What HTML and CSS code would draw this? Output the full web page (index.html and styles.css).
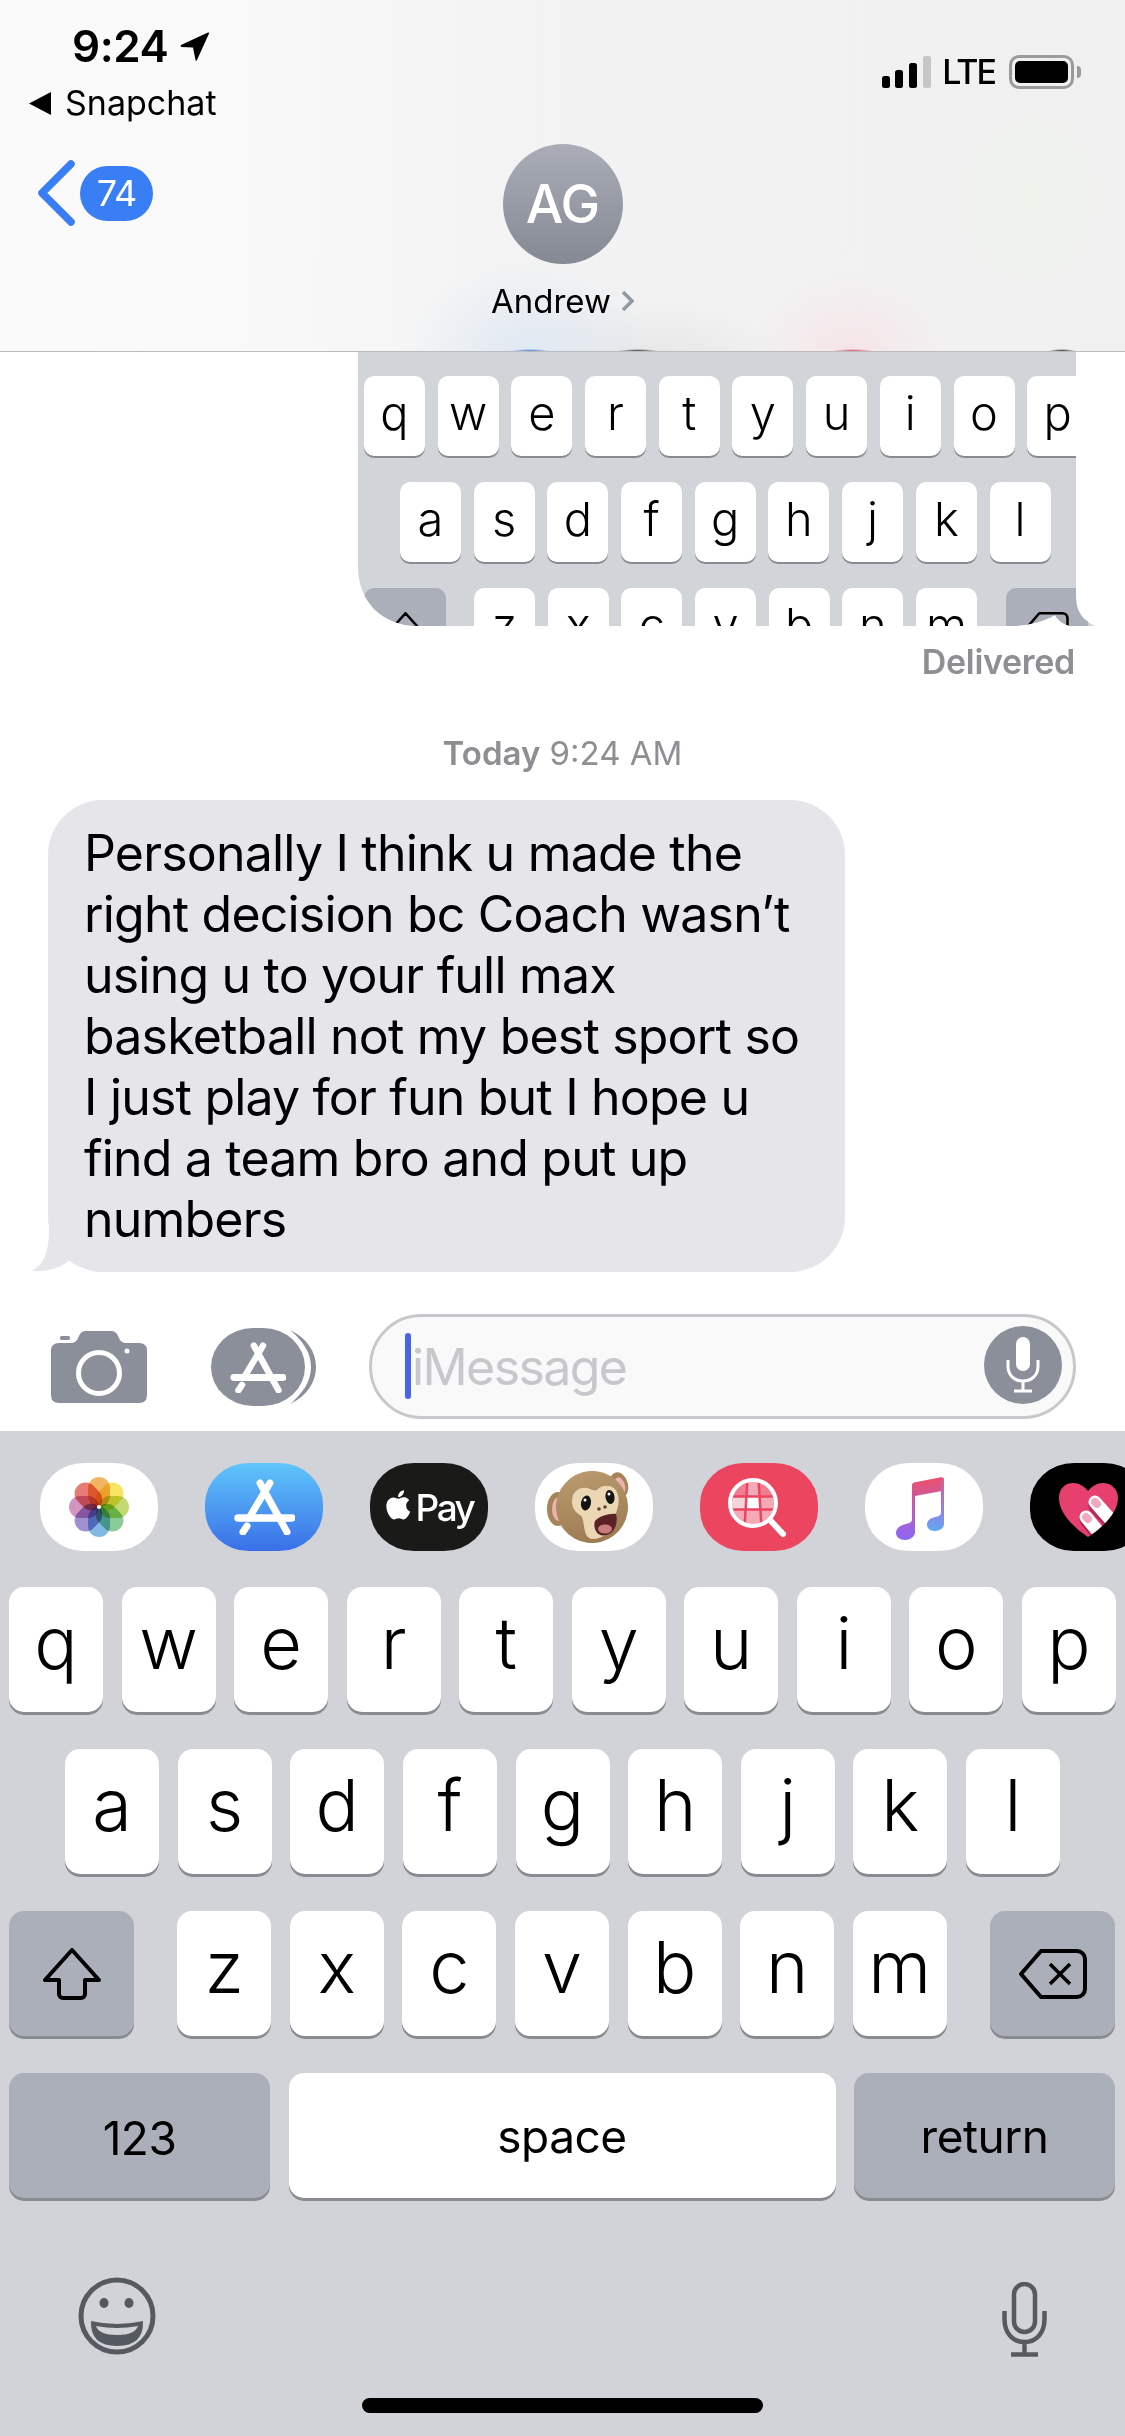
FILE: index.html
```html
<!DOCTYPE html>
<html lang="en">
<head>
<meta charset="utf-8">
<title>Messages</title>
<link rel="stylesheet" href="styles.css">
</head>
<body>
<svg class="defs" aria-hidden="true">
  <symbol id="appstore" viewBox="0 0 61 56">
    <g fill="none" stroke="#fff" stroke-linecap="round">
      <path stroke-width="7" d="M36 4 15 39M13 47l-4 6M26 4l27 49"/>
      <path stroke-width="7.5" d="M4 39h54"/>
    </g>
  </symbol>
  <symbol id="shift" viewBox="0 0 58 52">
    <path fill="none" stroke="currentColor" stroke-width="4" stroke-linejoin="round" d="M29 2 2 32h14v14a4 4 0 0 0 4 4h18a4 4 0 0 0 4-4V32h14z"/>
  </symbol>
  <symbol id="delete" viewBox="0 0 68 50">
    <path fill="none" stroke="currentColor" stroke-width="4" stroke-linejoin="round" d="M22 2h36a8 8 0 0 1 8 8v30a8 8 0 0 1-8 8H22L2 25z"/>
    <path fill="none" stroke="currentColor" stroke-width="3.5" d="m31 15 20 20M51 15 31 35"/>
  </symbol>
</svg>
<main class="phone">
  <header class="header">
    <div class="status">
      <div class="status-left">
        <div class="time-row">
          <span class="time">9:24</span>
          <svg class="loc" viewBox="0 0 30 30"><path d="M1 14 28 1.500q1.500-.5 1 1L17 29q-1 1.500-1.500 0L13 16.500 1.500 16q-1.500-1-.5-2z"/></svg>
        </div>
        <div class="source">
          <svg class="source-arrow" viewBox="0 0 22 23"><path d="M0 11.500 22 0v23z"/></svg>
          <span>Snapchat</span>
        </div>
      </div>
      <div class="status-right">
        <svg class="signal" viewBox="0 0 50 32">
          <rect x="0" y="20" width="8" height="12" rx="2.500"/>
          <rect x="13" y="14" width="8" height="18" rx="2.500"/>
          <rect x="27" y="7" width="8" height="25" rx="2.500"/>
          <rect class="signal-off" x="41" y="0" width="8" height="32" rx="2.500"/>
        </svg>
        <span class="lte">LTE</span>
        <div class="battery"><div class="battery-fill"></div></div>
        <div class="battery-nub"></div>
      </div>
    </div>
    <div class="nav">
      <div class="nav-back">
        <svg class="chevron" viewBox="0 0 40 66"><path d="M34 4 5 33l29 29"/></svg>
        <span class="badge">74</span>
      </div>
      <div class="contact">
        <div class="avatar">AG</div>
        <div class="contact-name">
          <span>Andrew</span>
          <svg class="name-chevron" viewBox="0 0 13 20"><path d="m2 1 9 9-9 9"/></svg>
        </div>
      </div>
    </div>
  </header>

  <section class="thread">
    <div class="mini">
      <div class="key-row mini-row1">
        <div class="key">q</div><div class="key">w</div><div class="key">e</div><div class="key">r</div><div class="key">t</div><div class="key">y</div><div class="key">u</div><div class="key">i</div><div class="key">o</div><div class="key">p</div>
      </div>
      <div class="key-row mini-row2">
        <div class="key">a</div><div class="key">s</div><div class="key">d</div><div class="key">f</div><div class="key">g</div><div class="key">h</div><div class="key">j</div><div class="key">k</div><div class="key">l</div>
      </div>
      <div class="key-row mini-row3">
        <div class="key key-dark key-side"><svg class="ico-shift"><use href="#shift"/></svg></div>
        <div class="key">z</div><div class="key">x</div><div class="key">c</div><div class="key">v</div><div class="key">b</div><div class="key">n</div><div class="key">m</div>
        <div class="key key-dark key-side key-del"><svg class="ico-delete"><use href="#delete"/></svg></div>
      </div>
    </div>
    <div class="delivered">Delivered</div>
    <div class="stamp"><strong>Today</strong> 9:24 AM</div>
    <div class="bubble">
      <svg class="tail" viewBox="0 0 40 44"><path d="M18 0c0 25-6 36-17 42 16 1 28-3 38-11V0z"/></svg>
      Personally I think u made the<br>
      right decision bc Coach wasn’t<br>
      using u to your full max<br>
      basketball not my best sport so<br>
      I just play for fun but I hope u<br>
      find a team bro and put up<br>
      numbers
    </div>
  </section>

  <section class="composer">
    <svg class="camera" viewBox="0 0 96 72">
      <path class="ico-fill" d="M8 12h13q3 0 5-3l3-6q2-3 5-3h27q3 0 5 3l3 6q2 3 5 3h14q8 0 8 8v44q0 8-8 8H8q-8 0-8-8V20q0-8 8-8z"/>
      <rect x="9" y="5" width="10" height="4" rx="1.500" class="ico-fill"/>
      <rect x="9" y="10" width="10" height="2" fill="#fff"/>
      <circle cx="48" cy="42" r="20.500" fill="none" stroke="#fff" stroke-width="5"/>
      <circle cx="76" cy="20" r="2.500" fill="#fff"/>
    </svg>
    <svg class="apps-btn" viewBox="0 0 105 78">
      <rect class="ico-fill" x="0" y="0" width="94" height="78" rx="42" ry="39"/>
      <path class="ico-fill" d="M79 2c17 8 26 22 26 37s-9 29-26 37c12-10 21-22 21-37S91 12 79 2z"/>
      <use href="#appstore" x="19" y="14" width="56" height="51"/>
    </svg>
    <div class="field">
      <span class="caret"></span>
      <span class="placeholder">iMessage</span>
      <svg class="field-mic" viewBox="0 0 78 78">
        <ellipse class="ico-fill" cx="39" cy="39" rx="39" ry="39"/>
        <rect x="32" y="11" width="14" height="34" rx="7" fill="#fff"/>
        <path d="M24 34v6c0 9 6 15 15 15s15-6 15-15v-6M39 55v10M30 65h18" fill="none" stroke="#fff" stroke-width="3"/>
      </svg>
    </div>
  </section>

  <section class="keyboard">
    <div class="app-strip">
      <div class="pill pill-white">
        <svg class="pill-art" viewBox="0 0 118 88">
          <g class="petals">
            <rect x="48" y="14" width="22" height="30" rx="11" fill="#f0a23c"/>
            <rect x="48" y="14" width="22" height="30" rx="11" fill="#f5de3c" transform="rotate(45 59 44)"/>
            <rect x="48" y="14" width="22" height="30" rx="11" fill="#b4d14e" transform="rotate(90 59 44)"/>
            <rect x="48" y="14" width="22" height="30" rx="11" fill="#6cc07e" transform="rotate(135 59 44)"/>
            <rect x="48" y="14" width="22" height="30" rx="11" fill="#62a8de" transform="rotate(180 59 44)"/>
            <rect x="48" y="14" width="22" height="30" rx="11" fill="#8a74c4" transform="rotate(225 59 44)"/>
            <rect x="48" y="14" width="22" height="30" rx="11" fill="#c77cb4" transform="rotate(270 59 44)"/>
            <rect x="48" y="14" width="22" height="30" rx="11" fill="#e25a50" transform="rotate(315 59 44)"/>
          </g>
          <circle cx="59" cy="44" r="2" fill="#fff"/>
        </svg>
      </div>
      <div class="pill pill-store">
        <svg class="pill-store-art"><use href="#appstore"/></svg>
      </div>
      <div class="pill pill-pay">
        <svg class="apple" viewBox="0 0 24 24"><path fill="#fff" d="M17.050 12.540c-.03-2.600 2.120-3.850 2.220-3.910-1.210-1.770-3.090-2.010-3.760-2.040-1.600-.16-3.120.94-3.930.94-.81 0-2.070-.92-3.400-.89-1.750.03-3.360 1.020-4.260 2.580-1.820 3.150-.46 7.820 1.300 10.380.87 1.250 1.900 2.660 3.260 2.610 1.310-.05 1.800-.85 3.380-.85 1.580 0 2.020.85 3.400.82 1.410-.02 2.300-1.270 3.160-2.530 1-1.450 1.410-2.860 1.430-2.930-.03-.01-2.740-1.050-2.770-4.180zM14.450 4.890c.72-.88 1.210-2.090 1.070-3.300-1.040.04-2.300.69-3.050 1.570-.67.77-1.260 2.010-1.100 3.200 1.160.09 2.350-.59 3.080-1.470z"/></svg>
        <span>Pay</span>
      </div>
      <div class="pill pill-white">
        <svg class="pill-art" viewBox="0 0 118 88">
          <defs>
            <linearGradient id="fur" x1="0" y1="0" x2="0" y2="1"><stop offset="0" stop-color="#b8986c"/><stop offset="1" stop-color="#9c7b52"/></linearGradient>
          </defs>
          <ellipse cx="23" cy="46" rx="11" ry="17" fill="#a5845a"/>
          <ellipse cx="24" cy="46" rx="7" ry="12" fill="#ecb3ae"/>
          <ellipse cx="84" cy="22" rx="9" ry="13" fill="#a5845a" transform="rotate(-15 84 22)"/>
          <ellipse cx="85" cy="23" rx="5" ry="9" fill="#ecb3ae" transform="rotate(-15 85 23)"/>
          <ellipse cx="57" cy="44" rx="36" ry="36" fill="url(#fur)" transform="rotate(-15 57 44)"/>
          <path fill="#ebd7b4" d="M37 38c0-10 9-16 18-12 3 1 5 2 7 1 6-7 19-5 21 5 2 8-1 15-3 21 0 14-9 21-20 23-8 1-10-5-11-13-1-6-1-9-4-11-5-3-8-7-8-14z"/>
          <ellipse cx="51" cy="40" rx="5" ry="7.500" fill="#141414" transform="rotate(10 51 40)"/>
          <ellipse cx="75" cy="34" rx="4.500" ry="7" fill="#141414" transform="rotate(-10 75 34)"/>
          <circle cx="50" cy="37" r="1.500" fill="#fff"/>
          <circle cx="74" cy="31" r="1.500" fill="#fff"/>
          <circle cx="64" cy="46" r="1.800" fill="#5b4330"/>
          <circle cx="70" cy="44" r="1.800" fill="#5b4330"/>
          <path fill="#5a2226" d="M60 58c4-5 15-8 21-7 2 6 0 15-5 19-6 4-13 3-15-2-2-3-2-7-1-10z"/>
          <ellipse cx="70" cy="66" rx="7" ry="4.500" fill="#c97d7a"/>
        </svg>
      </div>
      <div class="pill pill-search">
        <svg class="pill-art" viewBox="0 0 118 88">
          <clipPath id="lens"><circle cx="53" cy="40" r="21"/></clipPath>
          <g clip-path="url(#lens)">
            <rect x="28" y="16" width="50" height="18" fill="#f17d92"/>
            <rect x="28" y="34" width="19" height="12" fill="#f6d4dc"/>
            <rect x="47" y="34" width="12" height="12" fill="#fff"/>
            <rect x="59" y="34" width="19" height="12" fill="#f4a9b7"/>
            <rect x="28" y="46" width="50" height="18" fill="#f4a9b7"/>
            <rect x="47" y="16" width="12" height="18" fill="#f4a9b7"/>
            <path d="M28 33.500h50M28 46.500h50M47.500 16l-3 48M58.500 16l3 48" stroke="#ec4560" stroke-width="2.500" fill="none"/>
          </g>
          <circle cx="53" cy="40" r="23" fill="none" stroke="#fff" stroke-width="4"/>
          <path d="m70 57 13 14" fill="none" stroke="#fff" stroke-width="6" stroke-linecap="round"/>
        </svg>
      </div>
      <div class="pill pill-white">
        <svg class="pill-art" viewBox="0 0 118 88">
          <defs>
            <linearGradient id="noteL" x1="0" y1="0" x2="0" y2="1"><stop offset="0" stop-color="#ee5068"/><stop offset="0.55" stop-color="#b65fc0"/><stop offset="1" stop-color="#8a68f8"/></linearGradient>
            <linearGradient id="noteR" x1="0" y1="0" x2="0" y2="1"><stop offset="0" stop-color="#d85c90"/><stop offset="0.5" stop-color="#a07ad8"/><stop offset="1" stop-color="#5fa8f6"/></linearGradient>
          </defs>
          <path fill="url(#noteL)" d="M47 22q0-2 2-2.500L77 14v14l-27 5v36c0 4-4 8-10 8-5 0-9-3-9-7 0-5 5-8 10-9 4-1 6-2 6-5z"/>
          <path fill="url(#noteR)" d="M76 15q3-1.500 3 1v45c0 4-4 7-9 7s-8-3-8-6c0-5 4-7 8-8 4-.7 6-1.500 6-5z"/>
        </svg>
      </div>
      <div class="pill pill-black">
        <svg class="pill-art" viewBox="0 0 118 88">
          <clipPath id="heart"><path d="M58 74C40 62 29 48 29 35c0-9 6-15 14-15 6 0 11 3 15 8 4-5 9-8 15-8 8 0 15 6 15 15 0 13-12 27-30 39z"/></clipPath>
          <path fill="#e8406e" d="M58 74C40 62 29 48 29 35c0-9 6-15 14-15 6 0 11 3 15 8 4-5 9-8 15-8 8 0 15 6 15 15 0 13-12 27-30 39z"/>
          <g clip-path="url(#heart)" fill="none" stroke-linecap="round">
            <path d="m66 43 22 24M57 57l20 24" stroke="#b22a55" stroke-width="15"/>
            <path d="m65 39 23 26M56 54l20 24" stroke="#fff" stroke-width="13"/>
            <path d="m65 39 2 2M56 54l2 2" stroke="#f2a9bd" stroke-width="8"/>
          </g>
        </svg>
      </div>
    </div>

    <div class="key-row row-10">
      <div class="key">q</div><div class="key">w</div><div class="key">e</div><div class="key">r</div><div class="key">t</div><div class="key">y</div><div class="key">u</div><div class="key">i</div><div class="key">o</div><div class="key">p</div>
    </div>
    <div class="key-row row-9">
      <div class="key">a</div><div class="key">s</div><div class="key">d</div><div class="key">f</div><div class="key">g</div><div class="key">h</div><div class="key">j</div><div class="key">k</div><div class="key">l</div>
    </div>
    <div class="key-row row-shift">
      <div class="key key-dark key-side"><svg class="ico-shift"><use href="#shift"/></svg></div>
      <div class="key-group">
        <div class="key">z</div><div class="key">x</div><div class="key">c</div><div class="key">v</div><div class="key">b</div><div class="key">n</div><div class="key">m</div>
      </div>
      <div class="key key-dark key-side"><svg class="ico-delete"><use href="#delete"/></svg></div>
    </div>
    <div class="key-row row-bottom">
      <div class="key key-dark key-wide key-label key-num">123</div>
      <div class="key key-space key-label">space</div>
      <div class="key key-dark key-wide key-label">return</div>
    </div>

    <div class="kb-tools">
      <svg class="emoji" viewBox="0 0 78 78">
        <circle cx="39" cy="39" r="36" fill="none" stroke="#555a60" stroke-width="5"/>
        <ellipse cx="26" cy="26" rx="4.500" ry="5" fill="#555a60"/>
        <ellipse cx="51" cy="26" rx="4.500" ry="5" fill="#555a60"/>
        <path fill="#555a60" d="M13 44q26 6 52 0 1 25-26 25T13 44z"/>
        <path fill="#d1d3d9" d="M18 49q21 4 42 0-3 9-21 9t-21-9z"/>
      </svg>
      <svg class="kb-mic" viewBox="0 0 45 75">
        <rect x="12" y="2" width="21" height="48" rx="10.500" fill="none" stroke="#555a60" stroke-width="4.500"/>
        <path d="M2.500 29v8c0 14 8 23 20 23s20-9 20-23v-8M22.500 60v12M9 72.500h27" fill="none" stroke="#555a60" stroke-width="4.500"/>
      </svg>
    </div>
    <div class="home-bar"></div>
  </section>
</main>
</body>
</html>
```
FILE: styles.css
```css
* { box-sizing: border-box; }
html, body { margin: 0; padding: 0; background: #fff; }
.defs { display: none; }
.phone {
  width: 1125px;
  height: 2436px;
  display: flex;
  flex-direction: column;
  overflow: hidden;
  font-family: Inter, "Liberation Sans", sans-serif;
  color: #000;
  background: #fff;
}

/* header */
.header {
  height: 352px;
  flex: none;
  border-bottom: 1px solid #bcbcbe;
  background:
    radial-gradient(ellipse 20px 2px at 530px 351px, #3f74d8, transparent),
    radial-gradient(ellipse 20px 2px at 638px 351px, #333, transparent),
    radial-gradient(ellipse 20px 2px at 853px 351px, #d8405c, transparent),
    radial-gradient(ellipse 14px 2px at 1062px 351px, #222, transparent),
    radial-gradient(ellipse 130px 100px at 530px 360px, #dfe8f3, transparent),
    radial-gradient(ellipse 100px 80px at 850px 355px, #f6e4e8, transparent),
    radial-gradient(ellipse 90px 110px at 1030px 200px, #eef3ec, transparent),
    radial-gradient(ellipse 160px 70px at 640px 370px, #e4e4e4, transparent),
    linear-gradient(90deg, #fafafa 0, #f9f9f9 240px, #f3f3f3 520px, #f0f0f0 1125px);
}
.status {
  height: 144px;
  display: flex;
  justify-content: space-between;
  padding: 24px 44px 0 29px;
}
.time-row { display: flex; align-items: center; gap: 12px; margin-left: 43px; height: 44px; }
.time { font-size: 44px; line-height: 44px; font-weight: 600; letter-spacing: -0.5px; }
.loc { width: 30px; height: 30px; fill: #000; margin-top: -1px; }
.source { display: flex; align-items: center; gap: 14px; margin-top: 15px; font-size: 34px; line-height: 40px; }
.source-arrow { width: 22px; height: 23px; fill: #000; }
.status-right { display: flex; align-items: center; height: 34px; margin-top: 31px; }
.signal { width: 50px; height: 32px; fill: #000; margin-right: 10px; }
.signal-off { fill: #c6c6c6; }
.lte { font-size: 34px; line-height: 34px; font-weight: 500; letter-spacing: -2px; margin-right: 14px; }
.battery { width: 65px; height: 34px; border: 3px solid #9a9a9a; border-radius: 10px; padding: 3px; }
.battery-fill { height: 100%; background: #000; border-radius: 5px; }
.battery-nub { width: 4px; height: 12px; margin-left: 3px; background: #9a9a9a; border-radius: 0 4px 4px 0; }

.nav { display: grid; grid-template-columns: 1fr auto 1fr; }
.nav-back { display: flex; align-items: center; gap: 3px; height: 66px; margin: 16px 0 0 37px; }
.chevron { width: 40px; height: 66px; fill: none; stroke: #3a7ef6; stroke-width: 7.500px; stroke-linecap: round; stroke-linejoin: round; }
.badge {
  width: 73px; height: 55px; border-radius: 28px; background: #3a7ef6; color: #fff;
  font-size: 36px; line-height: 55px; text-align: center; letter-spacing: -1px;
}
.contact { display: flex; flex-direction: column; align-items: center; }
.avatar {
  width: 120px; height: 120px; border-radius: 50%;
  background: linear-gradient(#aaadb8, #848993);
  color: #fff; font-size: 53px; line-height: 120px; text-align: center; font-weight: 500; letter-spacing: -1px;
}
.contact-name { display: flex; align-items: center; gap: 10px; margin-top: 15px; font-size: 33px; line-height: 44px; }
.name-chevron { width: 13px; height: 20px; fill: none; stroke: #8e99a2; stroke-width: 3.500px; }

/* thread */
.thread { flex: 1; display: flex; flex-direction: column; min-height: 0; }
.mini {
  width: 737px;
  height: 274px;
  margin-left: 358px;
  flex: none;
  padding: 24px 0 0 6px;
  background: #d1d4d9;
  display: flex;
  flex-direction: column;
  gap: 26px;
  overflow: hidden;
  clip-path: path("M0 0H718V245C718 260 725 268 737 274H715C705 274 698 266 697 263C685 270 670 274 650 274H60C25 274 0 250 0 215Z");
}
.key-row { display: flex; flex: none; }
.key {
  flex: none;
  width: 94px;
  height: 125px;
  border-radius: 15px;
  background: #fff;
  box-shadow: 0 3px 0 #888b90;
  display: flex;
  align-items: center;
  justify-content: center;
  padding-bottom: 13px;
  font-size: 72px;
  font-weight: 300;
  line-height: 1;
}
.key-dark { background: #abafb9; }
.key-side { width: 125px; padding-bottom: 0; color: #000; }
.ico-shift { width: 58px; height: 52px; color: #000; }
.ico-delete { width: 68px; height: 50px; color: #000; }

.mini .key { width: 61px; height: 80px; border-radius: 10px; font-size: 47px; padding-bottom: 8px; box-shadow: 0 2px 0 #888b90; }
.mini .key-side { width: 82px; padding-bottom: 0; }
.mini .ico-shift { width: 37px; height: 33px; }
.mini .ico-delete { width: 44px; height: 32px; }
.mini-row1, .mini-row2, .mini-row3 { gap: 12.700px; }
.mini-row2 { padding-left: 36px; }
.mini-row3 .key-side:first-child { margin-right: 15.300px; }
.mini-row3 .key-del { margin-left: 16px; }

.delivered {
  margin: 16px 50px 0 0;
  text-align: right;
  font-size: 34px;
  line-height: 40px;
  font-weight: 600;
  letter-spacing: -0.3px;
  color: #8e8e93;
}
.stamp {
  margin-top: 51px;
  text-align: center;
  font-size: 33px;
  line-height: 40px;
  color: #8e8e93;
}
.stamp strong { font-weight: 600; }
.bubble {
  position: relative;
  width: 797px;
  margin: 27px 0 0 48px;
  padding: 23px 0 22px 36px;
  background: #e5e5ea;
  border-radius: 55px;
  font-size: 50px;
  line-height: 61px;
  letter-spacing: -0.800px;
}
.tail { position: absolute; left: -17px; bottom: -1px; width: 40px; height: 44px; fill: #e5e5ea; }

/* composer */
.composer {
  height: 105px;
  margin-bottom: 12px;
  padding-left: 51px;
  flex: none;
  display: flex;
  align-items: center;
}
.ico-fill { fill: #8a8f9a; }
.camera { width: 96px; height: 72px; margin-right: 64px; }
.apps-btn { width: 105px; height: 78px; margin-right: 53px; }
.field {
  position: relative;
  width: 707px;
  height: 105px;
  border: 3px solid #c8c8cc;
  border-radius: 53px;
  background: #f9f9f9;
  display: flex;
  align-items: center;
  padding-left: 33px;
}
.caret { width: 6px; height: 66px; background: #4a64e8; border-radius: 3px; margin-top: -2px; }
.placeholder { margin-left: 1px; font-size: 50px; line-height: 66px; letter-spacing: -1.600px; color: #c7c7cc; }
.field-mic { position: absolute; right: 11px; top: 9px; width: 78px; height: 78px; }

/* keyboard */
.keyboard {
  flex: none;
  height: 1005px;
  background: #d1d3d9;
  display: flex;
  flex-direction: column;
}
.app-strip { display: flex; gap: 47px; padding: 32px 0 0 40px; height: 120px; overflow: hidden; flex: none; }
.pill {
  flex: none;
  width: 118px;
  height: 88px;
  border-radius: 44px / 41px;
  display: flex;
  align-items: center;
  justify-content: center;
}
.pill-white { background: #fff; }
.pill-black { background: #000; }
.pill-store { background: linear-gradient(#5fc6fa, #3a6fe8); }
.pill-search { background: #ec4560; }
.pill-pay { background: #1a1a18; color: #fff; gap: 0; font-size: 37px; font-weight: 500; letter-spacing: -2.500px; }
.apple { width: 34px; height: 34px; margin: -4px 0 0 -3px; }
.pill-art { width: 118px; height: 88px; display: block; }
.pill-store-art { width: 61px; height: 56px; }
.petals rect { opacity: 0.8; mix-blend-mode: multiply; }

.row-10 { justify-content: space-between; padding: 0 9px; margin-top: 36px; }
.row-9 { justify-content: space-between; padding: 0 65px; margin-top: 37px; }
.row-shift { justify-content: space-between; padding: 0 10px 0 9px; margin-top: 37px; }
.key-group { display: flex; gap: 18.600px; }
.row-bottom { gap: 18.500px; padding: 0 10px 0 9px; margin-top: 37px; }
.key-wide { width: 261px; }
.key-space { flex: 1; }
.key-label { font-size: 46px; font-weight: 400; padding-bottom: 0; letter-spacing: -0.5px; }
.key-num { padding: 4px 0 0; font-size: 46px; }

.kb-tools {
  display: flex;
  justify-content: space-between;
  align-items: flex-start;
  padding: 0 78px 0 78px;
  margin-top: 79px;
}
.emoji { width: 78px; height: 78px; }
.kb-mic { width: 45px; height: 75px; margin-top: 5px; }
.home-bar { width: 401px; height: 15px; border-radius: 8px; background: #000; margin: 41px 0 0 362px; }
```
